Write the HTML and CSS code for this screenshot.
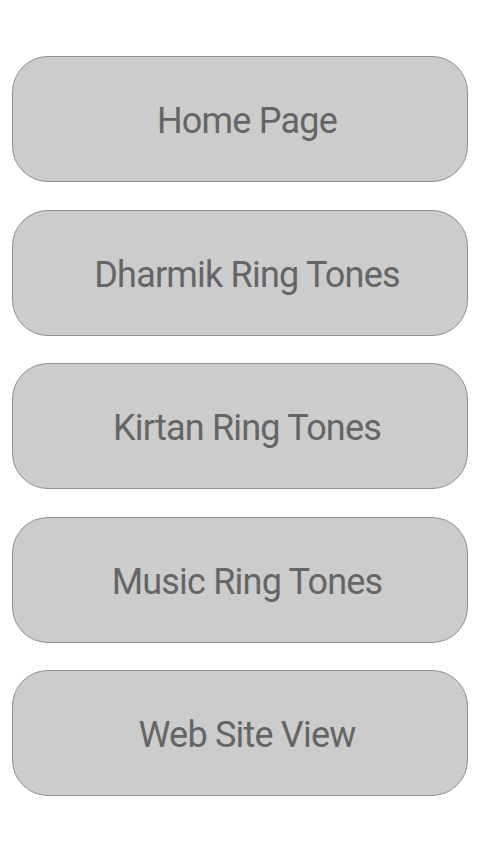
FILE: index.html
```html
<!DOCTYPE html>
<html lang="en">
<head>
  <meta charset="UTF-8" />
  <meta name="viewport" content="width=device-width, initial-scale=1.0" />
  <title>Ring Tones</title>
  <link rel="stylesheet" href="styles.css">
</head>
<body>

<main class="menu">
  <button class="menu-btn">Home Page</button>
  <button class="menu-btn">Dharmik Ring Tones</button>
  <button class="menu-btn">Kirtan Ring Tones</button>
  <button class="menu-btn">Music Ring Tones</button>
  <button class="menu-btn">Web Site View</button>
</main>

</body>
</html>
```

FILE: styles.css
```css
* {
  margin: 0;
  padding: 0;
  box-sizing: border-box;
}

html, body {
  height: 100%;
  background: #ffffff;
  font-family: Roboto, "Noto Sans", sans-serif;
}

.menu {
  display: flex;
  flex-direction: column;
  gap: 27.5px;
  padding: 56px 12px 0 12px;
  width: 480px;
}

.menu-btn {
  height: 126px;
  width: 456px;
  border: 1px solid #8f8f8f;
  border-radius: 36px;
  background: #cccccc;
  color: #656565;
  font-family: Roboto, "Noto Sans", sans-serif;
  font-size: 36px;
  letter-spacing: -0.8px;
  padding-left: 14px;
  padding-top: 4px;
  text-align: center;
  cursor: pointer;
}
```
